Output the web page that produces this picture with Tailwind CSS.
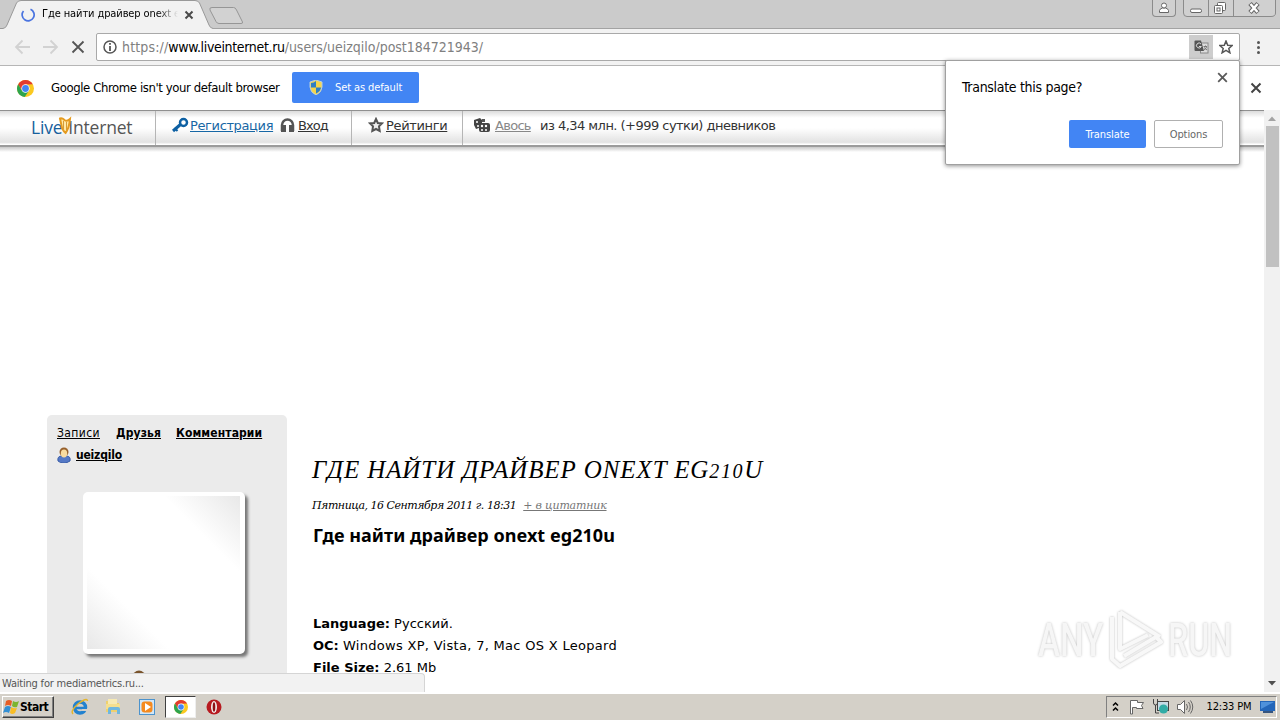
<!DOCTYPE html>
<html lang="ru">
  <head>
    <meta charset="UTF-8" />
    <meta name="viewport" content="width=device-width, initial-scale=1.0" />
    <title>Где найти драйвер onext eg210u</title>
    <script src="https://cdn.jsdelivr.net/npm/@tailwindcss/browser@4"></script>
  </head>
  <body class="w-[1280px] h-[720px] overflow-hidden bg-white text-black font-['DejaVu_Sans_Condensed','DejaVu_Sans',sans-serif] whitespace-nowrap">
    <svg class="hidden">
      <symbol id="chrome" viewBox="0 0 16 16">
        <circle cx="8" cy="8" r="8" fill="#fbc920" />
        <path d="M1.1 4A8 8 0 0 1 14.9 4L8 4.3 4.6 10Z" fill="#e33b2e" />
        <path d="M1.1 4A8 8 0 0 0 7.2 16L11.3 10 8 11.6 4.6 10Z" fill="#2da44e" />
        <circle cx="8" cy="8" r="3.9" fill="#fff" />
        <circle cx="8" cy="8" r="3.2" fill="#4285f4" />
      </symbol>
    </svg>

    <div class="relative flex flex-col w-full h-full">
      <!-- tab strip -->
      <div class="flex justify-between h-[29px] shrink-0 bg-[#cbcbcb] border-b border-[#a3a3a3]">
        <div class="relative flex w-[260px] h-[29px]">
          <svg class="absolute left-0 top-0" width="260" height="29">
            <path d="M0 28.5H3Q6 28 7 25L16.500 3Q18 .5 21 .5H195Q198 .5 199.500 3L209 25Q210 28 213 28.500V29H0Z" fill="#f2f2f2" />
            <path d="M0 28.500H3Q6 28 7 25L16.500 3Q18 .5 21 .5H195Q198 .5 199.500 3L209 25Q210 28 213 28.500" fill="none" stroke="#999" />
            <path d="M212 7.500H233.500Q235.500 7.500 236.500 10L242.500 22Q243 23.500 241 23.500H219Q217 23.500 216 21.500L210 10Q209 7.500 212 7.500Z" fill="#d2d2d2" stroke="#969696" />
          </svg>
          <div class="relative flex items-center pl-[21px] w-full">
            <svg width="14" height="14" viewBox="0 0 14 14"><path d="M9.500 1.300A6 6 0 1 1 2.500 3" fill="none" stroke="#4a74e0" stroke-width="1.700" /></svg>
            <span class="ml-[7px] w-[136px] text-[11px] tracking-[-0.1px] mask-r-from-85%">Где найти драйвер onext e</span>
            <svg class="ml-[6px]" width="10" height="10"><path d="M1.500 1.500L8.500 8.500M8.500 1.500L1.500 8.500" stroke="#4a4a4a" stroke-width="2" /></svg>
          </div>
        </div>
        <div class="flex pr-[4px] gap-[7px]">
          <div class="w-[24px] h-[17px] border border-t-0 border-[#8b8b8b] rounded-b bg-[#d0d0d0] flex justify-center">
            <svg width="12" height="15" fill="#fff" stroke="#666"><path d="M1.500 12.500V10.500Q2 8.500 4.500 8H7.500Q10 8.500 10.500 10.500V12.500Z" /><circle cx="6" cy="5.500" r="2.500" /></svg>
          </div>
          <svg width="93" height="17">
            <path d="M.5 0V13Q.5 16.500 4 16.500H88Q92.500 16.500 92.500 13V0" fill="#d0d0d0" stroke="#8b8b8b" />
            <path d="M25.500 0V16M50.500 0V16" stroke="#8b8b8b" />
            <rect x="7.500" y="9" width="11" height="3.500" rx="1.500" fill="#fff" stroke="#666" />
            <g fill="#fff" stroke="#666"><rect x="34.500" y="2.500" width="8" height="8" rx="1" /><rect x="31.500" y="5.500" width="8" height="8" rx="1" /><rect x="34" y="8" width="3" height="3" /></g>
            <path d="M67 3.500L75 12.500M75 3.500L67 12.500" stroke="#666" stroke-width="4.500" /><path d="M67.500 4L74.500 12M74.500 4L67.500 12" stroke="#fff" stroke-width="2.500" />
          </svg>
        </div>
      </div>

      <!-- toolbar -->
      <div class="flex items-center h-[37px] shrink-0 bg-[#f2f2f2] border-b border-[#b6b6b6]">
        <svg class="ml-[14px]" width="72" height="16" fill="none" stroke="#d2d2d2" stroke-width="1.800">
          <path d="M16 8H2.500M8.500 1.500L2 8L8.500 14.500" /><path d="M29 8H42.500M36.500 1.500L43 8L36.500 14.500" />
          <path d="M58.500 2.500L69.500 13.500M69.500 2.500L58.500 13.500" stroke="#555" />
        </svg>
        <div class="ml-[10px] flex items-center w-[1144px] h-[28px] bg-white border border-[#a9a9a9] rounded-xs">
          <svg class="ml-[6px]" width="14" height="14"><circle cx="7" cy="7" r="6" fill="none" stroke="#555" stroke-width="1.500" /><path d="M7 3V4.700M7 6V11" stroke="#555" stroke-width="1.800" /></svg>
          <span class="ml-[5px] text-[14px] tracking-[-0.02px] text-[#808080]"><span class="tracking-[0.15px]">https://</span><span class="text-black tracking-[-0.34px]">www.liveinternet.ru</span>/users/ueizqilo/post184721943/</span>
          <div class="ml-auto flex items-center justify-center w-[24px] h-[24px] bg-[#cdcdcd]">
            <svg width="15" height="14"><rect x="6.500" y="3" width="7.500" height="10" fill="#ddd" stroke="#888" /><path d="M.5 1.500Q.5 .5 1.500 .5H7L10 11H1.500Q.5 11 .5 10Z" fill="#555" /><path d="M7 4A2.500 2.500 0 1 0 7.300 6.500H5" fill="none" stroke="#ddd" /><path d="M9.500 6.500H13M11.500 5.500V7M12.500 7Q12 9 10 10M10 7.500L13 10" fill="none" stroke="#777" /></svg>
          </div>
          <svg class="ml-[6px] mr-[6px]" width="14" height="14" viewBox="0 0 14 14"><path d="M7 1L8.700 5.200L13.200 5.500L9.800 8.400L10.900 12.800L7 10.400L3.100 12.800L4.200 8.400L.8 5.500L5.300 5.200Z" fill="none" stroke="#555" stroke-width="1.500" /></svg>
        </div>
        <div class="ml-[17px] flex flex-col gap-[2px]"><i class="size-[3px] rounded-full bg-[#555]"></i><i class="size-[3px] rounded-full bg-[#555]"></i><i class="size-[3px] rounded-full bg-[#555]"></i></div>
      </div>

      <!-- default browser bar -->
      <div class="flex items-center h-[44px] shrink-0 bg-white">
        <svg class="ml-[17px]" width="17" height="17"><use href="#chrome" /></svg>
        <span class="ml-[17px] w-[228px] text-[13px] tracking-[-0.4px]">Google Chrome isn't your default browser</span>
        <div class="ml-[13px] mb-[1px] flex items-center w-[127px] h-[31px] bg-[#4285f4] rounded-xs text-white text-[11px] tracking-[-0.1px]">
          <svg class="ml-[17px] mr-[12px]" width="14" height="15" viewBox="0 0 14 15"><path d="M7 0L13 2V7Q13 12 7 15Q1 12 1 7V2Z" fill="#f5d64c" /><path d="M7 1V7.500H2V3Q5 3 7 1M7 7.500H12Q12 11 7 13.500Z" fill="#2f7fc4" /><path d="M7 0L13 2V7Q13 12 7 15Q1 12 1 7V2Z" fill="none" stroke="#b9cfdc" /></svg>
          <span class="pt-[1px]">Set as default</span>
        </div>
        <svg class="ml-auto mr-[18px]" width="12" height="12"><path d="M1.500 1.500L10.500 10.500M10.500 1.500L1.500 10.500" stroke="#444" stroke-width="2" /></svg>
      </div>

      <!-- page -->
      <div class="relative flex h-[582px] shrink-0">
        <div class="w-[1264px] overflow-hidden font-['DejaVu_Sans',sans-serif]">
          <div class="flex h-[35px] border-t border-[#909090] bg-[linear-gradient(#dcdcdc,#fff_20%,#fff_50%,#e2e2e2_92%,#fff_98%)] text-[13px] text-[#333]">
            <div class="relative w-[156px] border-r border-[#b5b5b5] pl-[31px] pt-[6px] font-['Open_Sans','Noto_Sans',sans-serif] text-[17.500px] leading-[21px] tracking-[-0.2px] text-[#555]">
              <span class="text-[#17609c]">Live</span><span class="ml-[6px]">Internet</span>
              <svg class="absolute left-[58px] top-[5px]" width="14" height="19"><path d="M2 2.500L4 12Q6 16 7.500 17Q11 13 12 3Q9 6 6.500 4Q4 1.500 2 2.500Z" fill="#ffe9a6" stroke="#e59b20" stroke-width="2" /><path d="M5.500 5V13M8.500 6V14" stroke="#d59b39" /></svg>
            </div>
            <div class="flex w-[196px] border-r border-[#b5b5b5] pl-[16px] pt-[6px] leading-[18px]">
              <svg width="17" height="17"><path d="M1 14L9 7" stroke="#0d60a3" stroke-width="3" /><path d="M2.500 11L5.500 14" stroke="#0d60a3" stroke-width="2" /><circle cx="11.500" cy="5.500" r="3.500" fill="none" stroke="#0d60a3" stroke-width="2.500" /></svg>
              <span class="ml-[1px] w-[83px] underline text-[#1767a5] tracking-[-0.37px]">Регистрация</span>
              <svg class="ml-[7px]" width="15" height="16"><path d="M2 14V8A5.500 5.500 0 0 1 13 8V14" fill="none" stroke="#555" stroke-width="2.500" /><path d="M1 8H6V15H1ZM9 8H14V15H9Z" fill="#555" /></svg>
              <span class="ml-[3px] underline tracking-[-0.9px]">Вход</span>
            </div>
            <div class="flex w-[111px] border-r border-[#b5b5b5] pl-[16px] pt-[6px] leading-[18px]">
              <svg width="16" height="17"><path d="M8 2L9.800 6L14 6.400L11 9.400L11.700 14L8 12L4.300 14L5 9.400L2 6.400L6.200 6Z" fill="#eee" stroke="#555" stroke-width="2" /></svg>
              <span class="ml-[2px] underline tracking-[-0.35px]">Рейтинги</span>
            </div>
            <div class="flex pl-[10px] pt-[6px] leading-[18px]">
              <svg width="18" height="16"><path d="M1 3L7 1L9 3V10L3 12L1 8Z" fill="#444" /><rect x="6" y="6" width="11" height="9" rx="2" fill="#444" /><path d="M9 2H12V5H9Z" fill="#555" /><g fill="#fff"><circle cx="4" cy="5" r="1" /><circle cx="5" cy="9" r="1" /><circle cx="9" cy="9" r="1.200" /><circle cx="13" cy="9" r="1.200" /><circle cx="9" cy="13" r="1" /><circle cx="13" cy="13" r="1" /></g></svg>
              <span class="ml-[4px] w-[45px] text-[#888] tracking-[-0.7px]"><u>Авось</u></span><span class="tracking-[-0.53px]">из 4,34 млн. (+999 сутки) дневников</span>
            </div>
          </div>
          <div class="h-[7px] border-t-2 border-[#9b9b9b] bg-linear-to-b from-[#c8c8c8] to-white"></div>

          <div class="flex mt-[263px] pl-[47px]">
            <div class="w-[240px] h-[290px] bg-[#ebebeb] rounded-[5px] px-[10px] pt-[7px] font-['DejaVu_Sans_Condensed','DejaVu_Sans',sans-serif] text-[12px] leading-[22px]">
              <div class="flex font-bold underline tracking-[0.1px]">
                <span class="w-[59px] font-medium tracking-[0.4px]">Записи</span><span class="w-[60px]">Друзья</span><span>Комментарии</span>
              </div>
              <div class="flex items-center gap-[5px] font-bold">
                <svg width="14" height="16"><path d="M1 14Q0 9 5 9H9Q14 9 13 14Q10 16 7 16Q3 16 1 14Z" fill="#5579c6" stroke="#395da8" /><circle cx="7" cy="5" r="4.500" fill="#96602c" /><ellipse cx="7" cy="6.500" rx="3.200" ry="4" fill="#f9dca0" /></svg>
                <span class="underline tracking-[-0.2px]">ueizqilo</span>
              </div>
              <div class="mt-[26px] ml-[26px] size-[162px] rounded-[5px] bg-white p-[4px] shadow-[3px_3px_3px_#777]">
                <div class="size-[153px] bg-[linear-gradient(45deg,#e8e8e8,#fff_27%,#fff_75%,#e8e8e8)]"></div>
              </div>
              <svg class="mt-[16px] ml-[75px]" width="14" height="14"><circle cx="7" cy="7" r="6.500" fill="#79542c" /></svg>
            </div>
            <div class="ml-[26px] pt-[38px]">
              <h1 class="h-[36px] -ml-px leading-[34px] font-['Liberation_Serif',serif] italic text-[25px] tracking-[0.9px]">ГДЕ НАЙТИ ДРАЙВЕР ONEXT EG<span class="text-[20px] tracking-[1.600px]">210</span>U</h1>
              <p class="mt-[9px] h-[16px] -ml-px leading-[16px] font-['DejaVu_Serif',serif] italic text-[11px] tracking-[-0.48px]">Пятница, 16 Сентября 2011 г. 18:31 <span class="ml-[4px] underline text-[#777] tracking-[-0.2px]">+ в цитатник</span></p>
              <h2 class="mt-[8px] leading-[26px] font-bold text-[18px] tracking-[0.04px] font-['Noto_Sans',sans-serif]">Где найти драйвер onext eg210u</h2>
              <div class="mt-[65px] text-[13px] leading-[22px]">
                <p><b>Language:</b> Русский.</p>
                <p><b>ОС:</b> <span class="tracking-[0.3px]">Windows XP, Vista, 7, Mac OS X Leopard</span></p>
                <p><b>File Size:</b> 2.61 Mb</p>
              </div>
            </div>
          </div>
        </div>
        <div class="w-[16px] flex flex-col items-center bg-[#f1f1f1]">
          <svg width="16" height="16"><path d="M4 11L8 6.500L12 11Z" fill="#a3a3a3" /></svg>
          <div class="w-[13px] h-[141px] bg-[#c1c1c1]"></div>
          <svg class="mt-auto" width="16" height="17"><path d="M4 6L8 10.500L12 6Z" fill="#505050" /></svg>
        </div>

        <div class="absolute left-0 bottom-0 w-[425px] h-[19px] bg-[#f2f2f2] border-t border-r border-[#d5d5d5] rounded-tr pl-[2px] text-[11px] leading-[19px] tracking-[-0.2px] text-[#555]">Waiting for mediametrics.ru...</div>

        <!-- watermark -->
        <div class="absolute left-[1038px] top-[498px] flex items-center text-[46px] leading-[64px] font-['Roboto','Liberation_Sans',sans-serif] font-medium text-[#f6f6f6] [text-shadow:0_0_3px_#bbb]">
          <span class="w-[66px]"><span class="inline-block origin-left scale-x-[0.72]">ANY</span></span>
          <svg width="64" height="64" fill="none" stroke-linejoin="round"><g class="drop-shadow-[0_0_1px_#bbb]" stroke="#f8f8f8" stroke-width="4"><path d="M16 4L56 29" /><path d="M16 4V41L44 27" /><path d="M8 9V51L16 58L57 34L52 29L20 48" /></g></svg>
          <span class="w-[66px]"><span class="inline-block origin-left scale-x-[0.7]">RUN</span></span>
        </div>
      </div>

      <!-- taskbar -->
      <div class="flex items-center h-[28px] shrink-0 bg-[#d4d0c8] border-t-2 border-white pb-[1px] pl-[2px] pr-[3px]">
        <div class="flex items-center w-[52px] h-[22px] border border-t-white border-l-white border-r-[#404040] border-b-[#404040] shadow-[inset_-1px_-1px_#808080] text-[12px] font-bold tracking-[-0.5px]">
          <svg class="mr-[1px]" width="16" height="16"><path d="M3 2Q6 0 9 2L8 7Q5 5 2 7Z" fill="#e65d26" /><path d="M10 2Q13 4 16 2L14 8Q11 9 9 7Z" fill="#7cb530" /><path d="M2 8Q5 6 8 8L6 14Q3 12 0 14Z" fill="#338fd4" /><path d="M8 8Q11 10 14 9L12 14Q9 16 7 14Z" fill="#f9bd24" /></svg>Start
        </div>
        <svg class="ml-[17px]" width="18" height="18"><circle cx="9" cy="9.500" r="5.500" fill="none" stroke="#2382cf" stroke-width="3.500" /><path d="M5 10H15" stroke="#2382cf" stroke-width="2.500" /><path d="M11 12H17" stroke="#d4d0c8" stroke-width="2" /><path d="M2 16Q-1 13 7 6Q16 -1 16.500 3" fill="none" stroke="#e5b52b" stroke-width="1.500" /></svg>
        <svg class="ml-[16px]" width="17" height="17"><path d="M1 3H6L8 5H14V14H1Z" fill="#eed06e" /><path d="M3 1H12V6H3Z" fill="#f7eab3" /><path d="M1 6H15V11H1Z" fill="#f5df8e" /><path d="M3 16V11Q3 9 5 9H13Q15 9 15 11V16H12V12H6V16Z" fill="#6fb7df" /></svg>
        <svg class="ml-[17px]" width="16" height="16"><rect x=".5" y=".5" width="15" height="15" fill="#d3e7f7" stroke="#4c93cd" /><rect x="2.500" y="2.500" width="11" height="11" rx="3" fill="#f58a1f" /><path d="M6 4V12L12 8Z" fill="#fff" /></svg>
        <div class="ml-[10px] flex items-center justify-center w-[31px] h-[22px] bg-white border border-t-[#404040] border-l-[#404040] border-[#eee]"><svg width="14" height="14"><use href="#chrome" /></svg></div>
        <svg class="ml-[10px]" width="16" height="16"><circle cx="8" cy="8" r="7.500" fill="#b71a20" /><ellipse cx="8" cy="8" rx="3" ry="6" fill="#f3eeee" /><ellipse cx="8" cy="8" rx="1.300" ry="4.800" fill="#8d1015" /></svg>
        <div class="ml-auto flex items-center w-[171px] h-[22px] border border-t-[#808080] border-l-[#808080] border-white pl-[5px] text-[11px] tracking-[-0.15px]">
          <svg width="7" height="12" fill="none" stroke="#000" stroke-width="1.500"><path d="M1 4.500L3.500 2L6 4.500M1 9.500L3.500 7L6 9.500" /></svg>
          <svg class="ml-[9px]" width="17" height="16" fill="#fff" stroke="#666"><path d="M2.500 15V1.500H9.500V3.500H15.500L13.500 6.500L15 9.500H8.500V8.500H4.500V15Z" /></svg>
          <svg class="ml-[7px]" width="18" height="17"><rect x="5.500" y="3.500" width="11" height="9" fill="#c5dbe6" stroke="#444" /><path d="M1.500 1V5Q1.500 7 3.500 7V15H7M5.500 1V5Q5.500 7 3.500 7" fill="none" stroke="#444" /><circle cx="11.500" cy="11" r="4.500" fill="#31aca6" /></svg>
          <svg class="ml-[7px]" width="17" height="16" fill="#fff" stroke="#666"><path d="M.5 5.500H3.500L7.500 1.500V14.500L3.500 10.500H.5Z" /><path d="M9.500 5Q11.500 8 9.500 11M11.500 3Q15 8 11.500 13M13.500 1.500Q18 8 13.500 14.500" fill="none" /></svg>
          <span class="ml-[13px] w-[46px] pt-[1px]">12:33 PM</span>
          <svg class="ml-[8px]" width="16" height="14"><path d="M0 1H15V11H0Z" fill="#2466b9" /><path d="M1 2H14L1 9Z" fill="#4f91db" /><path d="M3 11H13V13H3Z" fill="#36557f" /></svg>
        </div>
      </div>

      <!-- translate bubble -->
      <div class="absolute left-[945px] top-[60px] w-[295px] h-[105px] bg-white border border-[#a0a0a0] rounded-xs shadow-[0_1px_4px_#00000070] pl-[16px] pr-[16px]">
        <div class="flex justify-between">
          <span class="pt-[17px] text-[14px] leading-[18px] tracking-[-0.3px]">Translate this page?</span>
          <svg class="mt-[11px] -mr-[5px]" width="11" height="11"><path d="M1.200 1.200L9.800 9.800M9.800 1.200L1.200 9.800" stroke="#5a5a5a" stroke-width="1.800" /></svg>
        </div>
        <div class="mt-[24px] flex justify-end gap-[8px] text-[11px] leading-[29px] text-center tracking-[-0.1px]">
          <div class="w-[77px] h-[28px] bg-[#4285f4] rounded-xs text-white">Translate</div>
          <div class="w-[69px] h-[28px] border border-[#b0b0b0] rounded-xs text-[#666] leading-[27px]">Options</div>
        </div>
      </div>
    </div>
  </body>
</html>
